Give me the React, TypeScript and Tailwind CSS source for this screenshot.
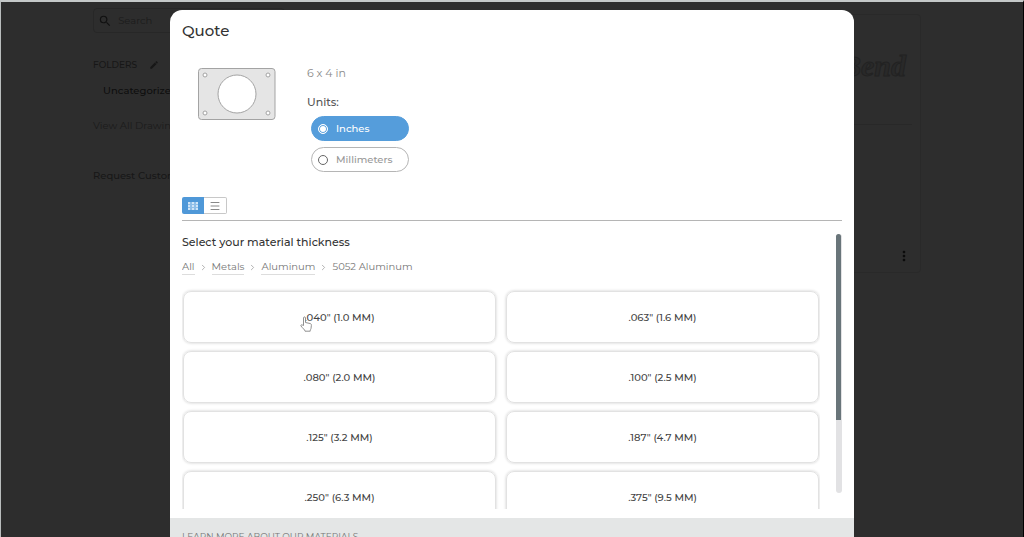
import { useState } from "react";
import clsx from "clsx";
import { ChevronRight, Menu } from "lucide-react";
import { MdEdit, MdMoreVert, MdSearch } from "react-icons/md";

const crumbs = ["All", "Metals", "Aluminum"];

const thicknesses = [
  { inches: '.040"', mm: "1.0" },
  { inches: '.063"', mm: "1.6" },
  { inches: '.080"', mm: "2.0" },
  { inches: '.100"', mm: "2.5" },
  { inches: '.125"', mm: "3.2" },
  { inches: '.187"', mm: "4.7" },
  { inches: '.250"', mm: "6.3" },
  { inches: '.375"', mm: "9.5" },
];

const units = ["Inches", "Millimeters"];

function PlateDrawing() {
  return (
    <svg
      viewBox="0 0 78 52"
      className="h-[52px] w-[78px]"
      role="img"
      aria-label="Plate with center hole"
    >
      <g stroke="#a3a3a3" strokeWidth="1">
        <rect x="0.5" y="0.5" width="76.5" height="51" rx="3" fill="#e5e5e5" />
        <circle cx="39" cy="26" r="19" fill="#fff" />
        <circle cx="7" cy="7" r="2" fill="#fff" />
        <circle cx="70" cy="7" r="2" fill="#fff" />
        <circle cx="7" cy="45" r="2" fill="#fff" />
        <circle cx="70" cy="45" r="2" fill="#fff" />
      </g>
    </svg>
  );
}

function GridIcon() {
  return (
    <svg viewBox="0 0 10 8" className="h-2 w-2.5" fill="#cfe4f7">
      <rect width="10" height="8" opacity="0.5" />
      {[0, 3, 6].map((y) =>
        [0, 4, 8].map((x) => (
          <rect key={`${x}-${y}`} x={x} y={y} width="2" height="2" />
        ))
      )}
    </svg>
  );
}

function HandPointer({ className }: { className?: string }) {
  return (
    <svg viewBox="0 0 12 16" className={className} aria-hidden="true">
      <path
        d="M3.5 9.500V2c0-1.500 2-1.500 2 0v4.500l4.500 1c1 .2 1.500.8 1.400 1.800L11 12.500c-.1.800-.8 1.200-.8 2.700H5c0-1.500-2.500-3-4-5.200-.5-.9.500-1.600 1.300-1z"
        fill="#fff"
        stroke="#858585"
        strokeWidth="0.9"
        strokeLinejoin="round"
      />
    </svg>
  );
}

function Library() {
  return (
    <main className="flex min-h-screen justify-between px-[92px] text-[#171717]">
      <aside className="w-48 pt-[6px] text-[10px] leading-4">
        <label className="flex h-[25px] items-center gap-1.5 rounded border border-[#272727] px-1">
          <MdSearch className="size-4 text-[#111]" />
          <input
            type="search"
            placeholder="Search"
            aria-label="Search"
            className="w-full bg-transparent outline-none placeholder:text-[#1b1b1b]"
          />
        </label>
        <h2 className="mt-6 flex items-center gap-3 text-[9px] font-medium">
          FOLDERS
          <MdEdit className="size-2.5" />
        </h2>
        <a href="#uncategorized" className="mt-2.5 block pl-2.5 font-medium text-[#0e0e0e]">
          Uncategorized
        </a>
        <a href="#drawings" className="mt-[19px] block text-[#1b1b1b]">
          View All Drawings
        </a>
        <a href="#custom" className="mt-[34px] block font-medium">
          Request Custom Part
        </a>
      </aside>

      <article className="mt-3 mr-2.5 flex h-[259px] w-60 flex-col rounded border border-[#292929] bg-[#2d2d2d] px-2">
        <div className="flex h-[110px] items-center justify-end border-b border-[#282828]">
          <svg viewBox="0 0 80 40" className="h-10 w-20" role="img" aria-label="Bend">
            <text
              x="74"
              y="26"
              textAnchor="end"
              fontFamily="Liberation Serif, serif"
              fontSize="30"
              fontStyle="italic"
              fontWeight="700"
              fill="#292929"
              stroke="#222"
              strokeWidth="1"
            >
              Bend
            </text>
          </svg>
        </div>
        <button type="button" aria-label="More options" className="mt-auto mb-2 self-end">
          <MdMoreVert className="size-4 text-[#0b0b0b]" />
        </button>
      </article>
    </main>
  );
}

function QuoteDialog() {
  const [unit, setUnit] = useState("Inches");
  const [view, setView] = useState("grid");

  return (
    <section
      role="dialog"
      aria-modal="true"
      aria-labelledby="quote-title"
      className="mx-auto mt-2 flex w-full max-w-[684px] flex-col overflow-hidden rounded-t-xl bg-white text-[#333]"
    >
      <header className="px-3 pt-[9px]">
        <h1 id="quote-title" className="text-[15px] leading-6 font-medium">
          Quote
        </h1>
        <div className="mt-[13px] flex gap-[31px] pl-4">
          <div className="pt-3">
            <PlateDrawing />
          </div>
          <div className="pt-[9px] text-[11px] leading-4">
            <p className="text-[#8a8a8a]">6 x 4 in</p>
            <fieldset className="mt-[13px]">
              <legend className="font-medium text-[#555]">Units:</legend>
              <div className="mt-1.5 ml-1 flex flex-col gap-1.5">
                {units.map((name) => (
                  <label
                    key={name}
                    className={clsx(
                      "flex h-[25px] w-[98px] items-center gap-2 rounded-full border px-1.5 text-[10px] font-medium",
                      unit === name
                        ? "border-[#559ddb] bg-[#559ddb] text-white"
                        : "border-[#b5b5b5] text-[#999]"
                    )}
                  >
                    <input
                      type="radio"
                      name="unit"
                      checked={unit === name}
                      onChange={() => setUnit(name)}
                      className="size-2.5 appearance-none rounded-full border border-[#666] checked:border-white checked:bg-white checked:shadow-[inset_0_0_0_1px_#559ddb]"
                    />
                    {name}
                  </label>
                ))}
              </div>
            </fieldset>
          </div>
        </div>
        <div className="mt-[25px] flex border-b border-[#b5b5b5] pb-1.5">
          <button
            type="button"
            aria-label="Grid view"
            aria-pressed={view === "grid"}
            onClick={() => setView("grid")}
            className="flex h-[17px] w-[22px] items-center justify-center rounded-l-xs bg-[#4f98d8]"
          >
            <GridIcon />
          </button>
          <button
            type="button"
            aria-label="List view"
            aria-pressed={view === "list"}
            onClick={() => setView("list")}
            className="flex h-[17px] w-[23px] items-center justify-center rounded-r-xs border border-l-0 border-[#c8c8c8] text-[#888]"
          >
            <Menu className="size-3" />
          </button>
        </div>
      </header>

      <div className="mt-[13px] flex h-[275px] gap-4 px-3">
        <div className="flex-1 overflow-hidden">
          <h2 className="text-[11px] leading-4 font-medium">
            Select your material thickness
          </h2>
          <nav
            aria-label="Breadcrumb"
            className="mt-2.5 flex items-center gap-1 text-[10px] leading-[14px] text-[#777]"
          >
            {crumbs.map((crumb) => (
              <div key={crumb} className="flex items-center gap-1">
                <a href={`#${crumb}`} className="border-b border-[#ddd]">
                  {crumb}
                </a>
                <ChevronRight className="size-[9px] text-[#999]" />
              </div>
            ))}
            <span className="border-b border-transparent">5052 Aluminum</span>
          </nav>
          <div className="mt-3.5 grid grid-cols-2 gap-x-2.5 gap-y-2 px-px py-0.5">
            {thicknesses.map((item, index) => (
              <button
                type="button"
                key={item.inches}
                className="relative h-[52px] rounded-lg border border-[#e2e2e2] text-[10px] font-medium text-[#444] shadow-[0_0_3px_#ccc]"
              >
                {item.inches} ({item.mm} MM)
                {index === 0 && (
                  <HandPointer className="absolute top-6 left-1/2 -ml-10 h-4 w-3" />
                )}
              </button>
            ))}
          </div>
        </div>
        <div className="h-[259px] w-1.5 rounded-full bg-[#e2e2e4]">
          <div className="h-[72%] w-[5px] rounded-t-full bg-[#69757a]" />
        </div>
      </div>

      <footer className="mt-[9px] bg-[#e4e6e6] px-3 pt-3 pb-10">
        <a href="#materials" className="block text-[9px] leading-[14px] text-[#777]">
          LEARN MORE ABOUT OUR MATERIALS
        </a>
      </footer>
    </section>
  );
}

export default function App() {
  return (
    <div className="relative h-screen overflow-hidden border-t-2 border-r border-l border-t-[#c4c8c8] border-r-black border-l-[#b9bdbd] bg-[#2d2d2d] font-['Montserrat','Inter',sans-serif]">
      <Library />
      <div className="absolute inset-0">
        <QuoteDialog />
      </div>
    </div>
  );
}
